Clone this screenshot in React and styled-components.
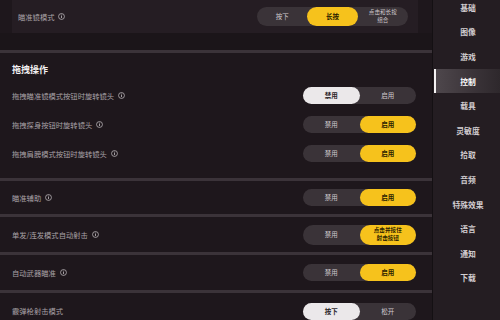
import React from "react";
import styled, { createGlobalStyle } from "styled-components";

const GlobalStyle = createGlobalStyle`
  html, body {
    margin: 0;
    padding: 0;
    background: #1e171c;
  }
  body {
    font-family: "Noto Sans CJK SC", "Noto Sans", sans-serif;
  }
`;

const Screen = styled.div`
  display: flex;
  width: 500px;
  height: 320px;
  overflow: hidden;
  background: #1e171c;
`;

const Main = styled.div`
  width: 432px;
  display: flex;
  flex-direction: column;
  & > * {
    flex-shrink: 0;
  }
`;

const TopCard = styled.div`
  height: 33px;
  margin: 0 14px 0 12px;
  padding: 0 10px 0 6px;
  display: flex;
  align-items: center;
  justify-content: space-between;
  background: #251d23;
`;

const TopGap = styled.div`
  height: 17px;
  background: #1b1519;
`;

const Group = styled.div`
  border-top: 3px solid #3b3339;
  padding-bottom: ${(p) => p.$pb || 0}px;
`;

const Header = styled.div`
  height: 28px;
  padding: 4px 0 0 12px;
  box-sizing: border-box;
  display: flex;
  align-items: center;
  color: #f2eff1;
  font-size: 9px;
  font-weight: 700;
`;

const Row = styled.div`
  height: ${(p) => p.$h}px;
  padding: 0 16px 0 12px;
  display: flex;
  align-items: center;
  justify-content: space-between;
`;

const Label = styled.div`
  display: flex;
  align-items: center;
  gap: 4px;
  color: #a8a1a6;
  font-size: 7.3px;
`;

const Track = styled.div`
  width: ${(p) => p.$w}px;
  height: ${(p) => p.$h}px;
  border-radius: 10px;
  background: #3a3338;
  display: flex;
`;

const Seg = styled.div`
  flex: 1;
  border-radius: 10px;
  display: flex;
  align-items: center;
  justify-content: center;
  text-align: center;
  font-size: ${(p) => (p.$small ? 5.6 : 6.5)}px;
  line-height: 1.35;
  font-weight: ${(p) => (p.$on ? 700 : 400)};
  color: ${(p) =>
    p.$on === "yellow" ? "#2b2100" : p.$on === "white" ? "#2a2428" : "#cfc9cd"};
  background: ${(p) =>
    p.$on === "yellow" ? "#f6c21c" : p.$on === "white" ? "#ebe8ea" : "transparent"};
`;

const Side = styled.div`
  flex: 1;
  background: #241d22;
  border-left: 1px solid #141013;
  display: flex;
  flex-direction: column;
  margin-top: -5px;
`;

const SideItem = styled.div`
  height: 24.6px;
  flex-shrink: 0;
  display: flex;
  align-items: center;
  justify-content: center;
  font-size: 7.8px;
  font-weight: 700;
  color: ${(p) => (p.$active ? "#ffffff" : "#d3ced1")};
  background: ${(p) =>
    p.$active ? "linear-gradient(90deg, #4e474c 0%, #3a3338 60%, #2e282c 100%)" : "transparent"};
  border-left: 2px solid ${(p) => (p.$active ? "#f4f2f3" : "transparent")};
  margin-left: 1px;
`;

const Info = () => (
  <svg width="7" height="7" viewBox="0 0 10 10">
    <circle cx="5" cy="5" r="4.2" fill="none" stroke="#bdb7bb" strokeWidth="1.1" />
    <rect x="4.4" y="4.1" width="1.2" height="3.2" fill="#bdb7bb" />
    <rect x="4.4" y="2.4" width="1.2" height="1.1" fill="#bdb7bb" />
  </svg>
);

const Toggle = ({ on, right = "启用", small }) => (
  <Track $w={113} $h={small ? 20 : 17}>
    <Seg $on={on === 0 ? "white" : undefined}>禁用</Seg>
    <Seg $on={on === 1 ? "yellow" : undefined} $small={small}>
      {right}
    </Seg>
  </Track>
);

const sideItems = ["基础", "图像", "游戏", "控制", "载具", "灵敏度", "拾取", "音频", "特殊效果", "语言", "通知", "下载"];

export default function App() {
  return (
    <Screen>
      <GlobalStyle />
      <Main>
        <TopCard>
          <Label>
            瞄准镜模式 <Info />
          </Label>
          <Track $w={151} $h={19}>
            <Seg>按下</Seg>
            <Seg $on="yellow">长按</Seg>
            <Seg $small>
              点击和长按
              <br />
              组合
            </Seg>
          </Track>
        </TopCard>
        <TopGap />
        <Group $pb={10}>
          <Header>拖拽操作</Header>
          <Row $h={29}>
            <Label>
              拖拽瞄准镜模式按钮时旋转镜头 <Info />
            </Label>
            <Toggle on={0} />
          </Row>
          <Row $h={29}>
            <Label>
              拖拽探身按钮时旋转镜头 <Info />
            </Label>
            <Toggle on={1} />
          </Row>
          <Row $h={29}>
            <Label>
              拖拽肩膀模式按钮时旋转镜头 <Info />
            </Label>
            <Toggle on={1} />
          </Row>
        </Group>
        <Group>
          <Row $h={33}>
            <Label>
              瞄准辅助 <Info />
            </Label>
            <Toggle on={1} />
          </Row>
        </Group>
        <Group>
          <Row $h={35}>
            <Label>
              单发/连发模式自动射击 <Info />
            </Label>
            <Toggle
              on={1}
              small
              right={
                <>
                  点击并按住
                  <br />
                  射击按钮
                </>
              }
            />
          </Row>
        </Group>
        <Group>
          <Row $h={35}>
            <Label>
              自动武器瞄准 <Info />
            </Label>
            <Toggle on={1} />
          </Row>
        </Group>
        <Group>
          <Row $h={36}>
            <Label>霰弹枪射击模式</Label>
            <Track $w={113} $h={17}>
              <Seg $on="white">按下</Seg>
              <Seg>松开</Seg>
            </Track>
          </Row>
        </Group>
      </Main>
      <Side>
        {sideItems.map((s) => (
          <SideItem key={s} $active={s === "控制"}>
            {s}
          </SideItem>
        ))}
      </Side>
    </Screen>
  );
}
